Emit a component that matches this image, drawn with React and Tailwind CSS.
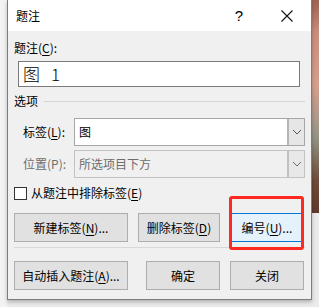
const Mn = ({ children }) => <span className="underline underline-offset-[2px]">{children}</span>;

const Chevron = ({ color = '#555' }) => (
    <svg width="10" height="6" viewBox="0 0 10 6" fill="none">
        <path d="M1 1 L5 5 L9 1" stroke={color} strokeWidth="1" />
    </svg>
);

const Button = ({ w, children }) => (
    <div className={`${w} h-[29px] flex items-center justify-center bg-[#e1e1e1] border border-[#adadad]`}>
        {children}
    </div>
);

const Select = ({ disabled, children }) => (
    <div
        className={`w-[231px] h-[28px] flex border ${
            disabled ? 'border-[#c2c2c2] bg-[#f0f0f0] text-[#6d6d6d]' : 'border-[#a6a6a6] bg-white text-black'
        }`}
    >
        <div className="flex-1 flex items-center pl-[4px]">{children}</div>
        <div
            className={`w-[17px] flex items-center justify-center border-l-2 ${
                disabled ? 'border-[#c2c2c2] bg-[#e8e8e8]' : 'border-[#b5b5b5] bg-[#e6e6e6]'
            }`}
        >
            <Chevron color={disabled ? '#6d6d6d' : '#555'} />
        </div>
    </div>
);

export default function App() {
    return (
        <div className="w-[319px] h-[307px] flex bg-[#ebebeb] overflow-hidden text-[12px] leading-[14px] text-black font-['Noto_Sans_CJK_SC','Noto_Sans',sans-serif]">
            {/* left edge */}
            <div className="w-[7px] h-full bg-[#f3f3f3]" />

            {/* dialog */}
            <div className="relative w-[305px] h-[300px] flex flex-col border-x border-b border-[#7d7d7d] shadow-[0_2px_4px_rgba(0,0,0,0.25)]">
                {/* title bar */}
                <div className="h-[31px] bg-white flex items-center">
                    <span className="ml-[8px] text-[12px]">题注</span>
                    <span className="ml-auto mr-[38px] text-[15px] font-['Liberation_Sans',sans-serif]">?</span>
                    <svg className="mr-[18px]" width="12" height="12" viewBox="0 0 12 12">
                        <path d="M0.5 0.5 L11.5 11.5 M11.5 0.5 L0.5 11.5" stroke="#111" strokeWidth="1.1" />
                    </svg>
                </div>

                {/* body */}
                <div className="flex-1 bg-[#f0f0f0] flex flex-col">
                    <div className="mt-[10px] ml-[6px] h-[14px]">
                        题注(<Mn>C</Mn>):
                    </div>

                    <div className="mt-[6px] ml-[10px] w-[282px] h-[26px] bg-white border border-[#7a7a7a] flex items-center pl-[4px] text-[17px] font-light">
                        <span>图</span>
                        <span className="ml-[11px]">1</span>
                    </div>

                    {/* options group */}
                    <div className="mt-[7px] ml-[6px] mr-[6px] h-[14px] flex items-center">
                        <span>选项</span>
                        <div className="flex-1 ml-[6px] h-px bg-[#d5d5d5]" />
                    </div>

                    <div className="mt-[10px] flex items-center">
                        <span className="ml-[15px] w-[51px]">
                            标签(<Mn>L</Mn>):
                        </span>
                        <Select>
                            <span>图</span>
                        </Select>
                    </div>

                    <div className="mt-[4px] flex items-center text-[#6d6d6d]">
                        <span className="ml-[15px] w-[51px]">位置(P):</span>
                        <Select disabled>所选项目下方</Select>
                    </div>

                    <div className="mt-[8px] ml-[6px] h-[14px] flex items-center">
                        <div className="w-[13px] h-[13px] bg-white border border-[#333]" />
                        <span className="ml-[4px]">
                            从题注中排除标签(<Mn>E</Mn>)
                        </span>
                    </div>

                    {/* action buttons */}
                    <div className="mt-[13px] ml-[6px] flex">
                        <Button w="w-[114px]">
                            新建标签(<Mn>N</Mn>)...
                        </Button>
                        <div className="ml-[10px]">
                            <Button w="w-[82px]">
                                删除标签(<Mn>D</Mn>)
                            </Button>
                        </div>
                        <div className="ml-[11px] w-[72px] h-[29px] flex items-center justify-center bg-[#e5f1fb] border border-[#0078d7]">
                            编号(<Mn>U</Mn>)...
                        </div>
                    </div>

                    <div className="mt-[5px] ml-[6px] mr-[6px] h-px bg-[#d8d8d8]" />

                    <div className="mt-[13px] ml-[6px] flex">
                        <Button w="w-[114px]">
                            自动插入题注(<Mn>A</Mn>)...
                        </Button>
                        <div className="ml-[18px]">
                            <Button w="w-[74px]">确定</Button>
                        </div>
                        <div className="ml-[10px]">
                            <Button w="w-[74px]">关闭</Button>
                        </div>
                    </div>
                </div>

                {/* red highlight annotation */}
                <div className="absolute left-[221px] top-[196px] w-[75px] h-[54px] border-[3px] border-[#ff2a1f] rounded-[3px]" />
            </div>

            {/* right edge: desktop background */}
            <div className="w-[7px] h-[213px] bg-[linear-gradient(to_bottom,#9c6252,#c98e7c_15%,#d6a08e_40%,#b09a8c_55%,#929484_65%,#6e4a3a_85%,#5e3a2c)]" />
        </div>
    );
}
